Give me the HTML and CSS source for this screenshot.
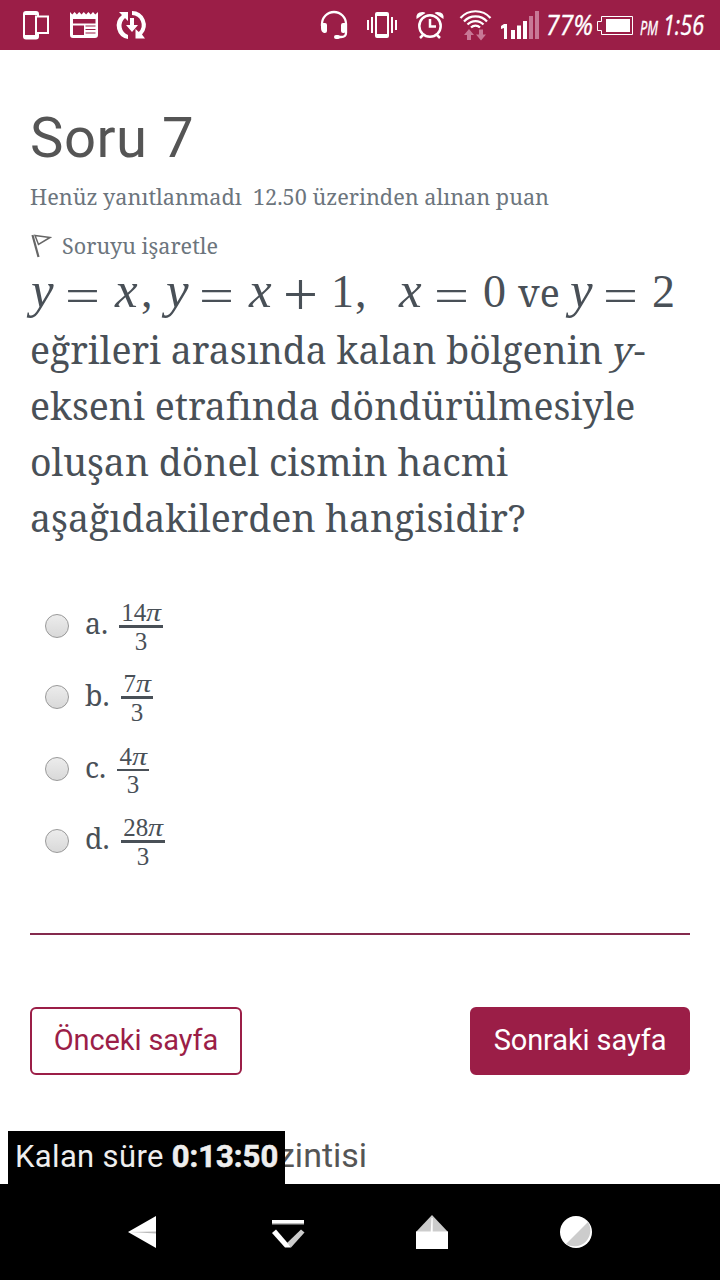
FILE: index.html
```html
<!DOCTYPE html>
<html lang="tr">
<head>
<meta charset="utf-8">
<title>Soru 7</title>
<link rel="stylesheet" href="styles.css">
</head>
<body>
<header class="status">
  <svg width="720" height="50" viewBox="0 0 720 50" fill="#fff">
    <!-- devices -->
    <path fill-rule="evenodd" d="M26 11h10a3 3 0 0 1 3 3v1.500h10v18.500h-10v2.500a3 3 0 0 1-3 3h-10a3 3 0 0 1-3-3v-22.500a3 3 0 0 1 3-3zM25 15v20h10v-19.500h2v-.5zM37 17.500v14.500h10v-14.500z"/>
    <!-- news -->
    <path fill-rule="evenodd" d="M70 12l2.300 2.500 2.300-2.500 2.300 2.500 2.300-2.500 2.300 2.500 2.300-2.500 2.300 2.500 2.300-2.500 2.300 2.500 2.300-2.500 2.300 2.500 2.700-2.500v23a3 3 0 0 1-3 3h-22a3 3 0 0 1-3-3zM73 19v4.500h22.500v-4.500zM73 25.500v9.500h11v-9.500zM85.500 25.500v1h10v-1zM85.500 29v1h10v-1zM85.500 32.500v1h10v-1z"/>
    <!-- sync -->
    <path d="M119 12h9v9l-3-3a10 10 0 0 0 3 17v4a13.500 13.500 0 0 1-6-24zM132 11a14 14 0 0 1 10 23.500l3 4h-9.500v-9.500l3.300 3a10 10 0 0 0-6.800-17zM130 18h4v7h4l-6 7-6-7h4z"/>
    <!-- headset -->
    <path d="M322 26v-2a12 12 0 0 1 24 0v9q0 4-5 4h-3" fill="none" stroke="#fff" stroke-width="2.300"/>
    <path d="M321 23h4a2 2 0 0 1 2 2v6a2 2 0 0 1-2 2h-1q-3-1-3-5zM347 23h-4a2 2 0 0 0-2 2v6a2 2 0 0 0 2 2h1q3-1 3-5z"/><rect x="334" y="35" width="6" height="4" rx="2"/>
    <!-- vibrate -->
    <path fill-rule="evenodd" d="M377 12h10a2 2 0 0 1 2 2v22a2 2 0 0 1-2 2h-10a2 2 0 0 1-2-2v-22a2 2 0 0 1 2-2zM377 16v18h10v-18z"/>
    <path d="M367 20h2v10h-2zM371 17h2v16h-2zM391 17h2v16h-2zM395 20h2v10h-2z"/>
    <!-- alarm -->
    <g fill="none" stroke="#fff" stroke-width="2.500"><circle cx="430" cy="26" r="10.700"/><path d="M430 19v7.500h6M423 35l-3 3M437 35l3 3"/></g>
    <path d="M416.500 19q-1-7 6-7 2 0 3 1zM443.500 19q1-7-6-7-2 0-3 1z"/>
    <!-- wifi -->
    <g fill="none" stroke="#fff" stroke-width="2.200"><path d="M460.500 18a20 20 0 0 1 30 0M464 21.500a15.500 15.500 0 0 1 23 0M467.500 24.500a11 11 0 0 1 16 0M471 27.500a6.500 6.500 0 0 1 9 0"/></g>
    <path fill="#c87896" d="M469 29l5 6h-3v5h-4v-5h-3zM481 40.500l-5-6h3v-5h4v5h3z"/>
    <!-- signal -->
    <path d="M504 24h3v15h-3v-11l-3 1v-3z"/>
    <path d="M511 30h4v9h-4zM517 25.500h4v13.500h-4zM523 21h4v18h-4z"/><path fill="#c87896" d="M529 16h4v23h-4zM535 11h4v28h-4z"/>
    <text class="status-text" x="546" y="35" font-size="27" textLength="47" lengthAdjust="spacingAndGlyphs">77%</text>
    <path fill="none" stroke="#fff" d="M601.500 16.500h31v18h-31v-4h-4v-9h4z"/><path d="M606 19h24v13h-24z"/>
    <text class="status-text" x="640" y="35" font-size="20" textLength="18" lengthAdjust="spacingAndGlyphs">PM</text>
    <text class="status-text" x="663" y="35" font-size="27" textLength="41" lengthAdjust="spacingAndGlyphs">1:56</text>
  </svg>
</header>
<main class="page">
  <h1 class="title">Soru 7</h1>
  <p class="info">Henüz yanıtlanmadı&nbsp; 12.50 üzerinden alınan puan</p>
  <p class="flag">
    <svg width="22" height="24" viewBox="0 0 22 24" fill="none" stroke="#666"><path stroke-width="2.200" d="M2.500 1l6 22"/><path stroke-width="1.500" d="M5 1.500l15 2-11.500 7z"/></svg>
    <span>Soruyu işaretle</span>
  </p>
  <div class="question">
    <div class="formula">
      <i class="w35">y</i><b class="w49 eq">=</b><i class="w27">x</i><span class="w24">,</span><i class="w34">y</i><b class="w49 eq">=</b><i class="w35">x</i><b class="w48">+</b><span class="w24">1</span><span class="w43">,</span><i class="w36">x</i><b class="w49 eq">=</b><span class="w35">0</span><em class="w51">ve</em><i class="w34">y</i><b class="w49 eq">=</b><span>2</span>
    </div>
    <div class="line">eğrileri arasında kalan bölgenin <i class="slant">y</i>-</div>
    <div class="line">ekseni etrafında döndürülmesiyle</div>
    <div class="line">oluşan dönel cismin hacmi</div>
    <div class="line">aşağıdakilerden hangisidir?</div>
  </div>
  <div class="answers">
    <label class="answer"><span class="radio"></span><span class="letter la">a.</span><span class="frac wide"><span class="num">14<i>π</i></span><span class="den">3</span></span></label>
    <label class="answer"><span class="radio"></span><span class="letter lb">b.</span><span class="frac"><span class="num">7<i>π</i></span><span class="den">3</span></span></label>
    <label class="answer"><span class="radio"></span><span class="letter lc">c.</span><span class="frac thin"><span class="num">4<i>π</i></span><span class="den">3</span></span></label>
    <label class="answer"><span class="radio"></span><span class="letter lb">d.</span><span class="frac wide"><span class="num">28<i>π</i></span><span class="den">3</span></span></label>
  </div>
  <div class="rule"></div>
  <div class="buttons"><button class="btn prev">Önceki sayfa</button><button class="btn next">Sonraki sayfa</button></div>
  <h2 class="nav-title">zintisi</h2>
  <div class="timer"><span>Kalan süre</span><strong>0:13:50</strong></div>
</main>
<footer class="navbar">
  <svg width="33" height="36" viewBox="0 0 33 36"><path fill="#fff" d="M0 17L28 1v32z"/><path fill="#bbb" d="M2 17l26-.5v2z"/></svg>
  <svg width="34" height="36" viewBox="0 0 34 36"><path fill="#fff" d="M1 5h32v4H1z"/><path fill="#bbb" d="M1 8h32v1.500H1z"/><path fill="#ccc" d="M16 28l14-13.500 3.500 3L20 32.500z"/><path fill="#fff" d="M1 18l4-3.500L17.500 29l2.500 3.500h-6z"/></svg>
  <svg width="34" height="36" viewBox="0 0 34 36"><path fill="#ccc" d="M1 17L17 0l16 17z"/><path fill="#fff" d="M1 16.500h32V34H1zM16.500 3h1.200v14h-2z"/></svg>
  <svg width="34" height="36" viewBox="0 0 34 36"><circle cx="17" cy="17" r="16" fill="#fff"/><path fill="#ccc" d="M29 7A16 16 0 0 1 7 29z"/></svg>
</footer>
</body>
</html>
```
FILE: styles.css
```css
* { box-sizing: border-box; }
body { margin: 0; width: 720px; height: 1280px; overflow: hidden; background: #fff; font-family: "Noto Serif", "DejaVu Serif Condensed", "DejaVu Serif", serif; font-stretch: condensed; color: #495057; }
h1, h2, p { margin: 0; font-weight: 400; }
.status { height: 50px; background: #9b1e47; }
.status svg { display: block; }
.status-text { font-family: "Open Sans", sans-serif; font-style: italic; font-stretch: normal; fill: #fff; stroke: #fff; stroke-width: 0.4px; }
.page { position: relative; height: 1134px; padding: 57px 30px 0; overflow: hidden; }
.title { font: 400 56.25px/62px Roboto, sans-serif; color: #555; letter-spacing: 0.5px; }
.info { margin-top: 11px; font-size: 21.65px; line-height: 34px; color: #6c757d; white-space: nowrap; }
.flag { display: flex; align-items: center; gap: 10px; height: 34px; margin-top: 15px; font-size: 21.6px; line-height: 34px; color: #6c757d; }
.question { margin-top: -5px; font-size: 37.45px; white-space: nowrap; }
.formula { display: flex; height: 64px; line-height: 56px; align-items: baseline; font-family: "Liberation Serif", serif; font-size: 46px; }
.formula > * { flex: none; }
.formula i { font-size: 51px; padding-left: 1px; }
.formula b { font-size: 62px; font-weight: 400; transform: translateY(8px); }
.formula .eq { transform: translateY(9px) scaleY(0.75); }
.formula em { font: normal 37.5px/56px "Noto Serif", "DejaVu Serif Condensed", "DejaVu Serif", serif; font-stretch: condensed; }
.w24 { width: 24px; } .w27 { width: 27px; } .w34 { width: 34px; } .w35 { width: 35px; } .w36 { width: 36px; }
.w43 { width: 43px; } .w48 { width: 48px; } .w49 { width: 49px; } .w51 { width: 51px; }
.line { height: 56px; line-height: 56px; }
.slant { display: inline-block; font-style: normal; transform: skewX(-14deg); }
.answers { margin-top: 44px; }
.answer { display: flex; align-items: center; height: 71.67px; padding-left: 15px; }
.radio { width: 24px; height: 24px; border: 1px solid #999; border-radius: 50%; background: linear-gradient(#ececec, #d9d9d9); }
.letter { margin-left: 16px; font-size: 28.5px; line-height: 36px; padding-bottom: 5px; }
.la { width: 34px; } .lb { width: 36px; } .lc { width: 32px; }
.frac { width: 32px; display: flex; flex-direction: column; align-items: center; padding-top: 2px; font-family: "Liberation Serif", serif; font-size: 25px; line-height: 28px; }
.frac i { display: inline-block; transform: scaleX(1.2); transform-origin: left; margin-right: 2px; }
.wide { width: 44px; }
.num { width: 100%; height: 30px; padding-top: 1px; border-bottom: 3px solid #495057; text-align: center; white-space: nowrap; }
.thin .num { height: 29px; border-bottom-width: 2px; }
.rule { height: 2px; margin-top: 56px; background: #842a4e; }
.buttons { display: flex; justify-content: space-between; margin-top: 72px; }
.btn { height: 68px; padding: 0 0 2px; border: 2px solid #9b1e47; border-radius: 6px; font: 400 29px/60px Roboto, sans-serif; letter-spacing: -0.1px; }
.prev { width: 212px; background: #fff; color: #9b1e47; }
.next { width: 220px; background: #9b1e47; color: #fff; }
.nav-title { margin: 60px 0 0 248px; font: 400 34px/40px Roboto, sans-serif; color: #555; }
.timer { position: absolute; left: 8px; top: 1081px; width: 277px; height: 53px; padding-left: 7px; display: flex; gap: 8px; background: #000; color: #eee; font: 400 31px/52px Roboto, sans-serif; white-space: nowrap; }
.timer span { letter-spacing: 0.35px; }
.timer strong { -webkit-text-stroke: 0.6px #eee; }
.navbar { height: 96px; display: flex; gap: 110px; padding: 31px 0 0 128px; background: #000; }
```
